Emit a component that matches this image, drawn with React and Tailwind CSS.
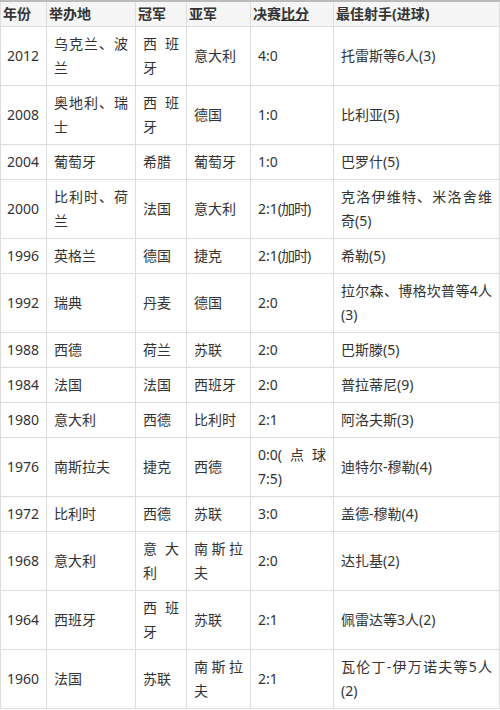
import React from "react";

const rows = [
  ["2012", "乌克兰、波兰", "西班牙", "意大利", "4:0", "托雷斯等6人(3)"],
  ["2008", "奥地利、瑞士", "西班牙", "德国", "1:0", "比利亚(5)"],
  ["2004", "葡萄牙", "希腊", "葡萄牙", "1:0", "巴罗什(5)"],
  ["2000", "比利时、荷兰", "法国", "意大利", "2:1(加时)", "克洛伊维特、米洛舍维奇(5)"],
  ["1996", "英格兰", "德国", "捷克", "2:1(加时)", "希勒(5)"],
  ["1992", "瑞典", "丹麦", "德国", "2:0", "拉尔森、博格坎普等4人(3)"],
  ["1988", "西德", "荷兰", "苏联", "2:0", "巴斯滕(5)"],
  ["1984", "法国", "法国", "西班牙", "2:0", "普拉蒂尼(9)"],
  ["1980", "意大利", "西德", "比利时", "2:1", "阿洛夫斯(3)"],
  ["1976", "南斯拉夫", "捷克", "西德", "0:0(点球7:5)", "迪特尔-穆勒(4)"],
  ["1972", "比利时", "西德", "苏联", "3:0", "盖德-穆勒(4)"],
  ["1968", "意大利", "意大利", "南斯拉夫", "2:0", "达扎基(2)"],
  ["1964", "西班牙", "西班牙", "苏联", "2:1", "佩雷达等3人(2)"],
  ["1960", "法国", "苏联", "南斯拉夫", "2:1", "瓦伦丁-伊万诺夫等5人(2)"],
];

const widths = ["w-[46px]", "w-[89px]", "w-[51px]", "w-[64px]", "w-[83px]", "w-[166px]"];

function Score({ text }) {
  const m = text.match(/^(.*)\((加时)\)$/);
  if (m) {
    return (
      <>
        {m[1]}
        <span className="tracking-[-1px]">(加时)</span>
      </>
    );
  }
  return text;
}

const thCls = "border border-[#ddd] border-t-2 border-t-[#bbb] px-[2px] py-0 text-left font-bold";

export default function App() {
  return (
    <div className="w-[500px] bg-white text-[#333] font-['Noto_Sans','Noto_Sans_CJK_SC',sans-serif] text-[14px] leading-[24px]">
      <table className="w-[499px] table-fixed border-collapse">
        <thead>
          <tr className="bg-[#f5f5f5]">
            <th className={`${widths[0]} ${thCls}`}>年份</th>
            <th className={`${widths[1]} ${thCls}`}>举办地</th>
            <th className={`${widths[2]} ${thCls}`}>冠军</th>
            <th className={`${widths[3]} ${thCls}`}>亚军</th>
            <th className={`${widths[4]} ${thCls}`}>
              决赛<span className="underline">比分</span>
            </th>
            <th className={`${widths[5]} ${thCls}`}>最佳射手(进球)</th>
          </tr>
        </thead>
        <tbody>
          {rows.map((r) => (
            <tr key={r[0]}>
              {r.map((c, i) =>
                i === 0 ? (
                  <td
                    key={i}
                    className="border border-[#ddd] pl-[6px] pr-[2px] py-[5px] align-middle whitespace-nowrap"
                  >
                    {c}
                  </td>
                ) : (
                  <td
                    key={i}
                    className="border border-[#ddd] px-[7px] py-[5px] align-middle text-justify"
                  >
                    {i === 4 ? <Score text={c} /> : c}
                  </td>
                )
              )}
            </tr>
          ))}
        </tbody>
      </table>
    </div>
  );
}
